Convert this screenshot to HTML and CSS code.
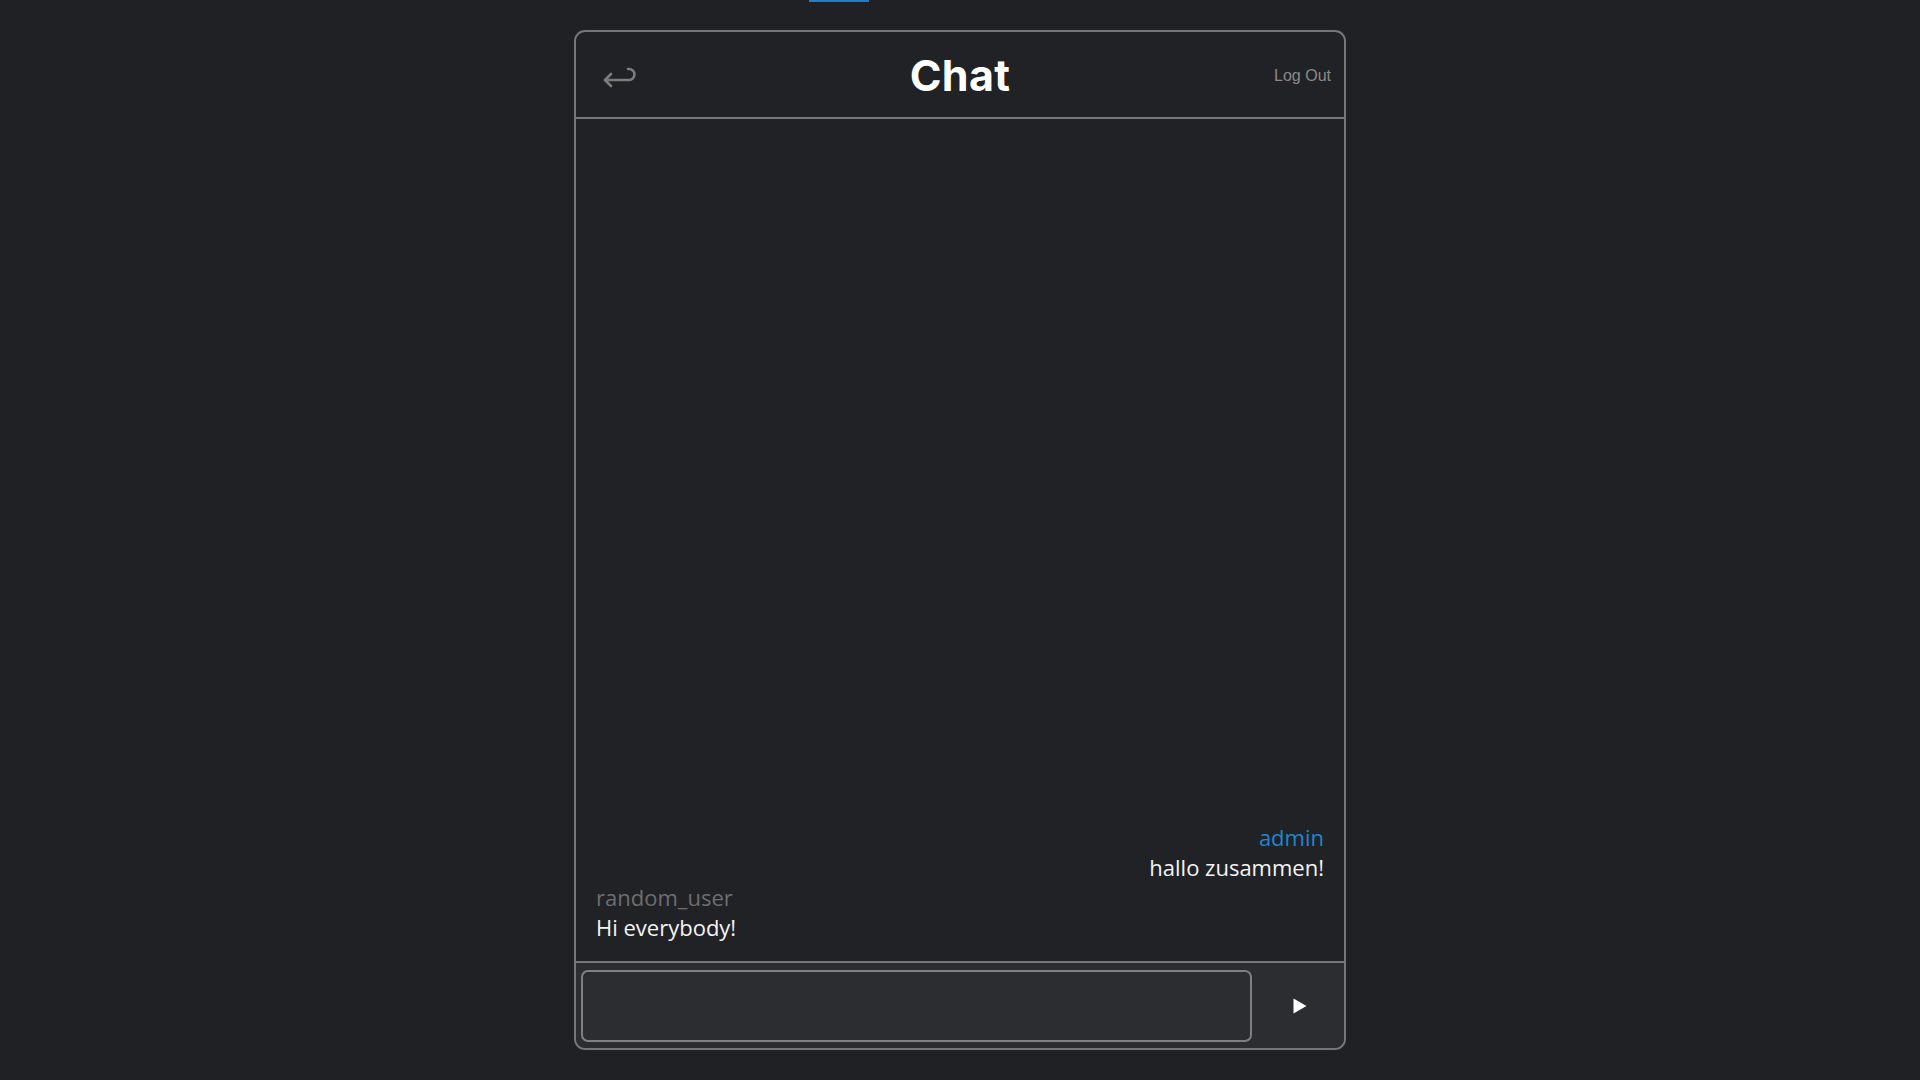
FILE: index.html
```html
<!DOCTYPE html>
<html lang="en">
<head>
<meta charset="utf-8">
<title>Chat</title>
<link rel="stylesheet" href="styles.css">
</head>
<body>
<div class="topstrip"><span class="tab-indicator"></span></div>
<main class="chat-card">
  <header class="chat-header">
    <button class="back-btn" aria-label="Back">
      <svg width="34" height="24" viewBox="0 0 34 24" fill="none" stroke="#7c7c7c" stroke-width="2.6" stroke-linecap="round" stroke-linejoin="round">
        <path d="M2 13 H26 A5.5 5.5 0 0 0 26 2 H25"/>
        <path d="M8 7 L2 13 L8 19"/>
      </svg>
    </button>
    <h1 class="chat-title">Chat</h1>
    <a class="logout" href="#">Log Out</a>
  </header>
  <section class="messages">
    <div class="msg msg-own">
      <div class="msg-user user-admin">admin</div>
      <div class="msg-text">hallo zusammen!</div>
    </div>
    <div class="msg">
      <div class="msg-user">random_user</div>
      <div class="msg-text">Hi everybody!</div>
    </div>
  </section>
  <footer class="composer">
    <textarea class="composer-input" aria-label="Message"></textarea>
    <button class="send-btn" aria-label="Send">
      <svg width="14" height="16" viewBox="0 0 14 16"><path d="M0.5 0.5 L13.5 8 L0.5 15.5 Z" fill="#ffffff"/></svg>
    </button>
  </footer>
</main>
</body>
</html>
```
FILE: styles.css
```css
html, body {
  margin: 0;
  padding: 0;
  height: 100%;
}
body {
  background: #202124;
  font-family: "Open Sans", "Noto Sans", sans-serif;
  overflow: hidden;
}
.topstrip {
  height: 2px;
  display: flex;
}
.tab-indicator {
  display: block;
  width: 60px;
  height: 2px;
  margin-left: 809px;
  background: #1a7fd0;
}
.chat-card {
  box-sizing: border-box;
  width: 772px;
  height: 1020px;
  margin: 28px auto 0;
  border: 2px solid #777779;
  border-radius: 11px;
  background: #212226;
  display: flex;
  flex-direction: column;
  overflow: hidden;
}
.chat-header {
  box-sizing: border-box;
  height: 87px;
  border-bottom: 2px solid #777779;
  display: grid;
  grid-template-columns: 1fr auto 1fr;
  align-items: center;
  padding: 0 13px;
}
.back-btn {
  justify-self: start;
  background: none;
  border: 0;
  padding: 0;
  margin: 9px 0 0 14px;
  display: flex;
  cursor: pointer;
}
.chat-title {
  margin: 0;
  font-family: "Inter", "Noto Sans", sans-serif;
  font-weight: 700;
  font-size: 43px;
  letter-spacing: 0.3px;
  color: #ffffff;
  line-height: 1;
  margin-top: 1px;
}
.logout {
  justify-self: end;
  font-family: "Liberation Sans", Arial, sans-serif;
  font-size: 16px;
  color: #8a8a8a;
  text-decoration: none;
  margin-top: 2px;
}
.messages {
  flex: 1;
  display: flex;
  flex-direction: column;
  justify-content: flex-end;
  padding: 0 20px 19px 20px;
}
.msg {
  display: flex;
  flex-direction: column;
  align-items: flex-start;
  font-size: 22px;
  line-height: 30px;
}
.msg-own {
  align-items: flex-end;
}
.msg-user {
  color: #6d6d6f;
}
.user-admin {
  color: #1d86cf;
}
.msg-text {
  color: #f4f4f4;
}
.composer {
  box-sizing: border-box;
  height: 87px;
  border-top: 2px solid #777779;
  background: #2c2d31;
  display: flex;
  align-items: stretch;
  padding: 7px 0 6px 5px;
}
.composer-input {
  box-sizing: border-box;
  width: 671px;
  resize: none;
  background: #2c2d31;
  border: 2px solid #808083;
  border-radius: 7px;
  color: #fff;
  font-family: inherit;
  font-size: 18px;
  outline: none;
}
.send-btn {
  flex: 1;
  background: none;
  border: 0;
  display: flex;
  align-items: center;
  justify-content: center;
  padding: 0 0 0 4px;
  cursor: pointer;
}
```
